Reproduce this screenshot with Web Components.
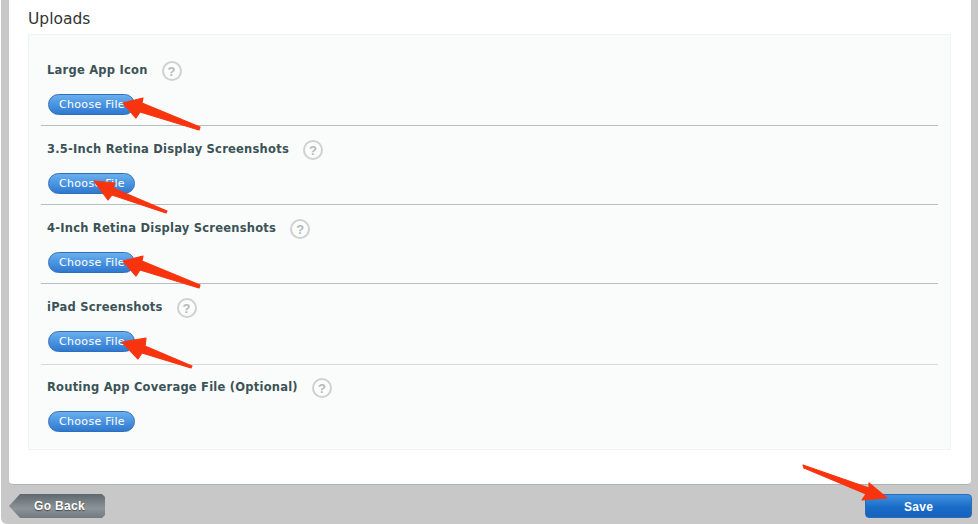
<!DOCTYPE html>
<html>
<head>
<meta charset="utf-8">
<title>Uploads</title>
<style>
  html, body { margin: 0; height: 100%; background: #fff; }
  body { overflow: hidden; font-family: "DejaVu Sans", sans-serif; }
</style>
</head>
<body>
<upload-page>
  <upload-box title-text="Uploads">
    <upload-row label="Large App Icon" first></upload-row>
    <upload-row label="3.5-Inch Retina Display Screenshots"></upload-row>
    <upload-row label="4-Inch Retina Display Screenshots"></upload-row>
    <upload-row label="iPad Screenshots" tall></upload-row>
    <upload-row label="Routing App Coverage File (Optional)" last></upload-row>
  </upload-box>
</upload-page>
<script>
// Help bubble next to each label
class HelpIcon extends HTMLElement {
  constructor() {
    super();
    this.attachShadow({ mode: 'open' }).innerHTML = `
      <style>
        :host {
          display: flex;
          width: 20px;
          height: 20px;
          margin-top: 2px;
          box-sizing: border-box;
          border: 2px solid #cdd1d1;
          border-radius: 50%;
          background: #fbfcfc;
          align-items: center;
          justify-content: center;
          color: #b4b9b9;
          font: bold 13px "Liberation Sans", sans-serif;
          letter-spacing: 0;
        }
      </style>?`;
  }
}
customElements.define('help-icon', HelpIcon);

class FileButton extends HTMLElement {
  constructor() {
    super();
    this.attachShadow({ mode: 'open' }).innerHTML = `
      <style>
        :host {
          display: flex;
          width: 87px;
          height: 21px;
          margin-left: 1px;
          padding-left: 1px;
          box-sizing: border-box;
          border-radius: 10.5px;
          border: 1px solid #2f6fb8;
          background: linear-gradient(#6aafee 0%, #4a94e0 50%, #2f78d0 100%);
          align-items: center;
          justify-content: center;
          color: #fff;
          font: 11px "DejaVu Sans", sans-serif;
          letter-spacing: 0.3px;
        }
      </style>Choose File`;
  }
}
customElements.define('file-button', FileButton);

class UploadRow extends HTMLElement {
  constructor() {
    super();
    const label = this.getAttribute('label') || '';
    this.attachShadow({ mode: 'open' }).innerHTML = `
      <style>
        :host {
          display: block;
          box-sizing: border-box;
          height: 79px;
          padding: 13px 6px 0;
          border-bottom: 1px solid #b3c0c0;
        }
        :host([first]) { height: 91px; padding-top: 25px; }
        :host([tall]) { height: 81px; border-bottom-color: #d6dbdb; }
        :host([last]) { height: 85px; padding-top: 12px; border-bottom: 0; }
        .head {
          display: flex;
          align-items: center;
          gap: 14px;
          height: 20px;
          margin-bottom: 14px;
          color: #3b5356;
          font: bold 11.5px "DejaVu Sans", sans-serif;
          letter-spacing: 0.23px;
        }
      </style>
      <div class="head"><span>${label}</span><help-icon></help-icon></div>
      <file-button></file-button>`;
  }
}
customElements.define('upload-row', UploadRow);

class UploadBox extends HTMLElement {
  constructor() {
    super();
    const title = this.getAttribute('title-text') || '';
    this.attachShadow({ mode: 'open' }).innerHTML = `
      <style>
        :host { display: block; padding: 0 20px 0 19px; }
        h2 {
          margin: 0;
          height: 34px;
          font: 400 15.5px/39px "DejaVu Sans", sans-serif;
          color: #333;
        }
        .box {
          height: 416px;
          box-sizing: border-box;
          padding: 0 12px;
          background: #fafbfb;
          border: 1px solid #f1f2f2;
        }
      </style>
      <h2>${title}</h2>
      <div class="box"><slot></slot></div>`;
  }
}
customElements.define('upload-box', UploadBox);

// Grey back button with pointed left edge
class BackButton extends HTMLElement {
  constructor() {
    super();
    this.attachShadow({ mode: 'open' }).innerHTML = `
      <style>
        :host {
          display: flex;
          width: 96px;
          height: 24px;
          padding-left: 5px;
          box-sizing: border-box;
          align-items: center;
          justify-content: center;
          color: #fff;
          font: bold 12px "Liberation Sans", sans-serif;
          letter-spacing: 0.3px;
          background: linear-gradient(#5e686e, #8b9498 60%, #707a80);
          clip-path: polygon(0 50%, 11px 0, calc(100% - 3px) 0, 100% 3px, 100% calc(100% - 3px), calc(100% - 3px) 100%, 11px 100%);
          text-shadow: 0 1px 1px #444;
        }
      </style>Go Back`;
  }
}
customElements.define('back-button', BackButton);

class SaveButton extends HTMLElement {
  constructor() {
    super();
    this.attachShadow({ mode: 'open' }).innerHTML = `
      <style>
        :host {
          display: flex;
          width: 107px;
          height: 24px;
          padding-top: 2px;
          box-sizing: border-box;
          border-radius: 4px;
          border: 1px solid #2a6cb4;
          align-items: center;
          justify-content: center;
          color: #fff;
          font: bold 12px "Liberation Sans", sans-serif;
          letter-spacing: 0.3px;
          background: linear-gradient(#3f92e2, #1a6cc8 55%, #1462bc);
        }
      </style>Save`;
  }
}
customElements.define('save-button', SaveButton);

// The red annotation arrows sit on top of everything
class CalloutArrows extends HTMLElement {
  constructor() {
    super();
    const arrows = [
      '123,103 143,98 142,103 200,127 199,130 140,112 136,118',
      '94,181 115,183 113,188 167,211 166,213 112,195 108,200',
      '123,261 143,256 142,261 200,285 199,288 140,270 136,276',
      '122,342 146,338 145,346 192,366 191,368 142,353 138,359',
      '887,498 869,483 869,488 803,465 804,468 866,494 862,500'
    ];
    this.attachShadow({ mode: 'open' }).innerHTML = `
      <style>
        :host { position: absolute; left: 0; top: 0; display: block; pointer-events: none; }
        svg { display: block; }
      </style>
      <svg width="978" height="524" viewBox="0 0 978 524">
        ${arrows.map((p) => `<polygon points="${p}" fill="#f8340f" stroke="#f8340f" stroke-width="1.2" stroke-linejoin="round"/>`).join('')}
      </svg>`;
  }
}
customElements.define('callout-arrows', CalloutArrows);

class UploadPage extends HTMLElement {
  constructor() {
    super();
    this.attachShadow({ mode: 'open' }).innerHTML = `
      <style>
        :host {
          display: block;
          position: relative;
          width: 978px;
          height: 524px;
          box-sizing: border-box;
          padding-left: 1px;
          overflow: hidden;
        }
        .frame {
          height: 524px;
          box-sizing: border-box;
          padding: 0 0 0 8px;
          background: #c8c8c8;
          border-bottom-left-radius: 6px;
        }
        .panel {
          height: 485px;
          width: 962px;
          box-sizing: border-box;
          background: #fff;
          border-bottom: 1px solid #aeb4b4;
          border-radius: 0 0 4px 4px;
        }
        .actions {
          display: flex;
          justify-content: space-between;
          width: 963px;
          padding-top: 9px;
        }
      </style>
      <div class="frame">
        <div class="panel"><slot></slot></div>
        <div class="actions">
          <back-button></back-button>
          <save-button></save-button>
        </div>
      </div>
      <callout-arrows></callout-arrows>`;
  }
}
customElements.define('upload-page', UploadPage);
</script>
</body>
</html>
